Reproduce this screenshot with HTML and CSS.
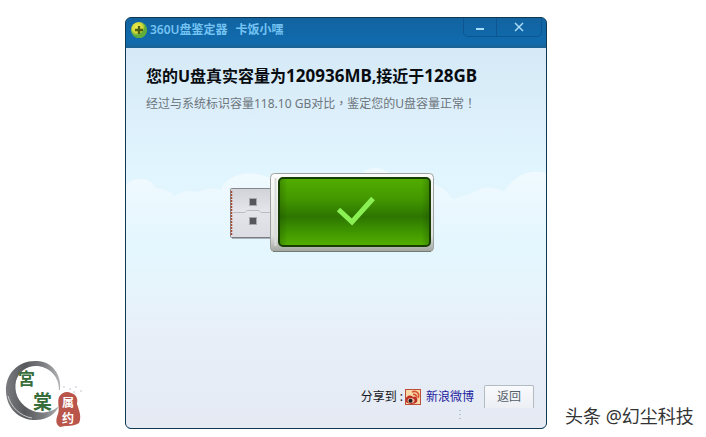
FILE: index.html
```html
<!DOCTYPE html>
<html lang="zh-CN">
<head>
<meta charset="utf-8">
<title>360U盘鉴定器</title>
<link rel="stylesheet" href="styles.css">
</head>
<body>
<div class="stage">
  <aside class="brand">
    <svg class="brand-logo" viewBox="0 0 82 76" role="img" aria-label="宮棠">
      <defs>
        <linearGradient id="ink" x1="0" y1="0" x2="1" y2="0">
          <stop offset="0" stop-color="#7b7c7f"/><stop offset=".35" stop-color="#58595c"/><stop offset=".7" stop-color="#7d7e81"/><stop offset="1" stop-color="#b4b5b7"/>
        </linearGradient>
      </defs>
      <path fill="url(#ink)" d="M55 37C57 22 47 8 32 8C14 7 0 20 1 39C2 56 14 66 28 67C40 68 50 62 54 53C46 60 34 62 24 56C12 49 9 38 11 28C14 18 23 12 33 13C46 15 54 24 54 37Z"/>
      <path fill="none" stroke="#c9c9ca" stroke-width="1" d="M3 43C6 54 15 63 27 65"/>
      <text class="logo-green" x="13" y="32" font-size="17">宮</text>
      <text class="logo-green" x="28" y="56" font-size="19">棠</text>
      <path fill="#b9554a" d="M54 44C57 39 62 38 66 40C72 42 73 46 72 51C74 57 77 64 74 70C68 74 62 72 55 74C50 71 51 66 53 61C55 55 52 50 54 44Z"/>
      <text class="logo-seal" x="57" y="54" font-size="12">属</text>
      <text class="logo-seal" x="57" y="70" font-size="12">约</text>
      <g fill="#b8bfd0"><circle cx="59" cy="34" r=".8"/><circle cx="65" cy="36" r=".8"/><circle cx="71" cy="34" r=".8"/><circle cx="69" cy="39" r=".8"/><circle cx="76" cy="38" r=".8"/></g>
    </svg>
  </aside>

  <main class="window">
    <header class="titlebar">
      <svg class="app-icon" viewBox="0 0 18 18" aria-hidden="true">
        <defs><radialGradient id="ball" cx=".4" cy=".35"><stop offset="0" stop-color="#f5f25a"/><stop offset=".65" stop-color="#d3d935"/><stop offset="1" stop-color="#5fae43"/></radialGradient></defs>
        <circle cx="9" cy="9" r="8" fill="url(#ball)"/>
        <path d="M3 14C9 15 14 12 15 4C18 9 17 14 12 16.500C8 18 5 16.500 3 14Z" fill="#5fae3c"/>
        <path d="M9 5V13M5 9H13" stroke="#4c6112" stroke-width="2.4"/>
      </svg>
      <span class="app-name">360U盘鉴定器</span>
      <span class="app-name">卡饭小嘿</span>
      <div class="controls">
        <button class="control" type="button" aria-label="最小化"><svg viewBox="0 0 12 12"><path d="M2 8H10" stroke="#a9dcf8" stroke-width="2"/></svg></button>
        <button class="control close" type="button" aria-label="关闭"><svg viewBox="0 0 12 12"><path d="M2 2L10 10M10 2L2 10" stroke="#a9dcf8" stroke-width="1.5"/></svg></button>
      </div>
    </header>

    <section class="content">
      <svg class="clouds" viewBox="0 0 420 80" preserveAspectRatio="none" aria-hidden="true">
        <defs><linearGradient id="cloud" x1="0" y1="0" x2="0" y2="1"><stop offset="0" stop-color="#f1fafe"/><stop offset="1" stop-color="#f1fafe" stop-opacity="0"/></linearGradient></defs>
        <path fill="url(#cloud)" d="M0 18C10 10 24 11 30 22Q42 23 48 30Q60 23 72 26Q84 20 95 24C101 6 128 4 144 12Q180 20 230 12Q246 -5 266 8Q290 9 306 17Q320 22 326 33Q345 29 356 22Q369 20 378 26C388 9 404 3 420 7V80H0Z"/>
      </svg>
      <h1>您的U盘真实容量为<span class="figure">120936MB</span>,接近于<span class="figure">128GB</span></h1>
      <p class="detail">经过与系统标识容量118.10 GB对比<span class="mark" lang="zh-TW">，</span>鉴定您的U盘容量正常<span class="mark" lang="zh-TW">！</span></p>

      <svg class="drive" viewBox="0 0 206 80" role="img" aria-label="正常">
        <defs>
          <linearGradient id="case" x1="0" y1="0" x2="0" y2="1"><stop offset="0" stop-color="#fbfcfb"/><stop offset=".8" stop-color="#dfe2df"/><stop offset="1" stop-color="#a1a59f"/></linearGradient>
          <linearGradient id="plug" x1="0" y1="0" x2="0" y2="1"><stop offset="0" stop-color="#d1d3d8"/><stop offset=".45" stop-color="#e4e4ea"/><stop offset="1" stop-color="#dcdde4"/></linearGradient>
          <linearGradient id="green" x1="0" y1="0" x2="0" y2="1"><stop offset="0" stop-color="#51ad00"/><stop offset=".3" stop-color="#449800"/><stop offset=".57" stop-color="#2d7500"/><stop offset=".75" stop-color="#3c9100"/><stop offset="1" stop-color="#53b000"/></linearGradient>
          <linearGradient id="side"><stop offset="0" stop-color="#163b00" stop-opacity=".25"/><stop offset=".05" stop-color="#163b00" stop-opacity="0"/><stop offset=".95" stop-color="#163b00" stop-opacity="0"/><stop offset="1" stop-color="#163b00" stop-opacity=".25"/></linearGradient>
        </defs>
        <rect x="1.5" y="15.5" width="48" height="49" rx="1" fill="url(#plug)" stroke="#85878d"/>
        <path d="M3 65H44" stroke="#6f7176"/>
        <path d="M2.5 18V63" stroke="#a8492c" stroke-width="1.5" stroke-dasharray="2 1"/>
        <path d="M4 39.500H16L18 37.500H30L32 39.500H42" fill="none" stroke="#babcc3"/>
        <g fill="#55575d" stroke="#a7a8ad"><rect x="20.500" y="25.500" width="7" height="7"/><rect x="20.500" y="44.500" width="7" height="7"/></g>
        <rect x="41.500" y=".5" width="163" height="78" rx="4" fill="url(#case)" stroke="#9da29e"/>
        <path d="M44 78.500H202" stroke="#747a70"/>
        <path d="M46.500 5V73" stroke="#d9dbd8" stroke-width="2"/>
        <rect x="50" y="5" width="151" height="68" rx="4" fill="url(#green)" stroke="#173f04" stroke-width="2"/>
        <rect x="51" y="6" width="149" height="66" rx="3" fill="url(#side)"/>
        <path d="M109.500 36.500L123 49L144 25.500" fill="none" stroke="#8af054" stroke-width="5"/>
      </svg>

      <footer class="actions">
        <span>分享到 :</span>
        <a class="share" href="#weibo">
          <svg class="weibo" viewBox="0 0 16 16" aria-hidden="true">
            <rect x=".5" y=".5" width="15" height="15" fill="#f8d9a5" stroke="#ba4e38"/>
            <path d="M1 9C4 5 7 7 8 8C12 7 13 10 12 13C9 16 3 15 1 13Z" fill="#bd2f25"/>
            <ellipse cx="6" cy="11.500" rx="3.500" ry="2.500" fill="#e9b9a0"/><circle cx="5.500" cy="11.800" r="2" fill="#222"/>
            <path d="M7 3C12 1 15 5 13 9M8 5.500C11 5 12 7 11 8.500" fill="none" stroke="#d75436" stroke-width="1.600"/>
          </svg>新浪微博</a>
        <button class="back" type="button">返回</button>
      </footer>
      <svg class="grip" viewBox="0 0 2 9" aria-hidden="true"><path d="M1 0V9" stroke="#8d98a3" stroke-dasharray="1 3"/></svg>
    </section>
  </main>

  <div class="credit">头条 @幻尘科技</div>
</div>
</body>
</html>
```
FILE: styles.css
```css
* { box-sizing: border-box; }

body {
  margin: 0;
  background: #fff;
  font: 12px/18px "Noto Sans", "Noto Sans CJK SC", sans-serif;
}

.stage {
  display: grid;
  grid-template-columns: 125px minmax(0, 1fr) 159px;
  min-height: 100vh;
  padding: 17px 0 8px;
}

.brand { align-self: end; padding-left: 5px; }
.brand-logo { display: block; width: 82px; height: 76px; }
.logo-green { fill: #376c3b; font-family: "Noto Sans CJK SC", sans-serif; font-weight: 700; }
.logo-seal { fill: #fff; font-family: "Noto Sans CJK SC", sans-serif; font-weight: 700; }

.window {
  display: flex;
  flex-direction: column;
  overflow: hidden;
  border: 1px solid #12384f;
  border-radius: 6px;
  background: #1067a8;
}

.titlebar {
  display: flex;
  align-items: flex-start;
  height: 30px;
  padding: 3px 4px 0;
  background: linear-gradient(#1263a0, #106bad 80%, #1a6295);
}

.app-icon { width: 18px; height: 18px; margin-right: 2px; }
.app-name { margin-right: 8px; color: #74c3f3; font-weight: 600; }

.controls {
  display: flex;
  align-self: flex-start;
  margin: -3px 0 0 auto;
  border: 1px solid #0d5590;
  border-top: 0;
  border-radius: 0 0 5px 5px;
}

.control {
  display: grid;
  place-items: center;
  width: 32px;
  height: 18px;
  padding: 0;
  border: 0;
  background: transparent;
}

.control svg { width: 12px; height: 12px; }
.close { width: 45px; border-left: 1px solid #0d5590; }

.content {
  position: relative;
  display: flex;
  flex: 1;
  flex-direction: column;
  padding: 16px 12px 20px 20px;
  background: linear-gradient(#d5e9f6, #dceffb 18%, #e1f5fe 32%, #e5f7fe 55%, #e8eff8 75%, #e5eaf3);
}

.clouds {
  position: absolute;
  top: 118px;
  left: 0;
  width: 100%;
  height: 80px;
}

h1 {
  margin: 0;
  color: #080c10;
  font-size: 16px;
  line-height: 24px;
  font-weight: 700;
}

.figure { font-size: 17px; }

.detail { margin: 6px 0 0; color: #6d757b; }
.mark { font-family: "Noto Sans CJK TC", sans-serif; }

.drive {
  position: relative;
  align-self: center;
  width: 206px;
  height: 80px;
  margin: 60px 16px 0 0;
}

.actions {
  display: flex;
  align-items: center;
  justify-content: flex-end;
  margin-top: auto;
  color: #15181c;
}

.share {
  display: flex;
  align-items: center;
  gap: 5px;
  margin: 0 10px 0 2px;
  color: #1d1da0;
  text-decoration: none;
}

.weibo { width: 16px; height: 16px; }

.back {
  width: 50px;
  height: 23px;
  padding: 0;
  border: 1px solid #b3bbc3;
  border-bottom: 0;
  border-radius: 2px 2px 0 0;
  background: linear-gradient(#f8fafc, #eceff4);
  color: #53606a;
  font: inherit;
}

.grip {
  position: absolute;
  right: 85px;
  bottom: 9px;
  width: 2px;
  height: 9px;
}

.credit {
  align-self: end;
  padding-left: 18px;
  color: #333;
  font-size: 18px;
  line-height: 26px;
  white-space: nowrap;
}
```
